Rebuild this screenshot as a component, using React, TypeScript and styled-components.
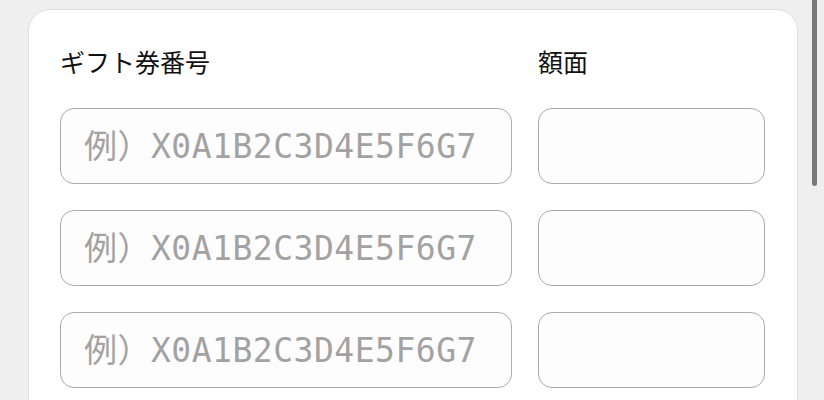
import styled, { createGlobalStyle } from "styled-components";

const GlobalStyle = createGlobalStyle`
   html, body {
      margin: 0;
      padding: 0;
      background-color: #efefef;
      overflow: hidden;
   }
   body {
      font-family: "Noto Sans CJK JP", "Noto Sans", sans-serif;
   }
`;

const ROWS = [0, 1, 2];

function App() {
   return (
      <>
         <GlobalStyle />
         <Page>
            <GiftCard>
               <FormGrid>
                  <FieldLabel>ギフト券番号</FieldLabel>
                  <FieldLabel>額面</FieldLabel>
                  {ROWS.map((row) => (
                     <Row key={row}>
                        <CodeInput type="text" placeholder="例）X0A1B2C3D4E5F6G7" />
                        <AmountInput type="text" />
                     </Row>
                  ))}
               </FormGrid>
            </GiftCard>
         </Page>
         <ScrollThumb />
      </>
   );
}

export default App;

const Page = styled.div`
   padding: 9px 26px 0 28px;
   height: 400px;
   box-sizing: border-box;
   overflow: hidden;
`;

const GiftCard = styled.section`
   background-color: #ffffff;
   border: 1px solid #e1e1e1;
   border-radius: 22px;
   padding: 36px 31px 40px 31px;
   box-sizing: border-box;
`;

const FormGrid = styled.div`
   display: grid;
   grid-template-columns: 452px 227px;
   column-gap: 26px;
   row-gap: 26px;
`;

const FieldLabel = styled.div`
   font-size: 25px;
   line-height: 30px;
   font-weight: 400;
   color: #111111;
   margin-bottom: 6px;
`;

const Row = styled.div`
   display: contents;
`;

const BaseInput = styled.input`
   height: 76px;
   box-sizing: border-box;
   border: 1px solid #ababab;
   border-radius: 14px;
   background-color: #fdfdfd;
   outline: none;
   margin: 0;
`;

const CodeInput = styled(BaseInput)`
   width: 452px;
   padding: 0 0 0 23px;
   font-family: "DejaVu Sans Mono", "Noto Sans CJK JP", monospace;
   font-size: 33px;
   letter-spacing: 0.5px;
   color: #333;

   &::placeholder {
      color: #a2a2a2;
   }
`;

const AmountInput = styled(BaseInput)`
   width: 227px;
   padding: 0 16px;
`;

const ScrollThumb = styled.div`
   position: fixed;
   top: 0;
   right: 7px;
   width: 5px;
   height: 186px;
   border-radius: 0 0 3px 3px;
   background-color: #7a7a7a;
`;
